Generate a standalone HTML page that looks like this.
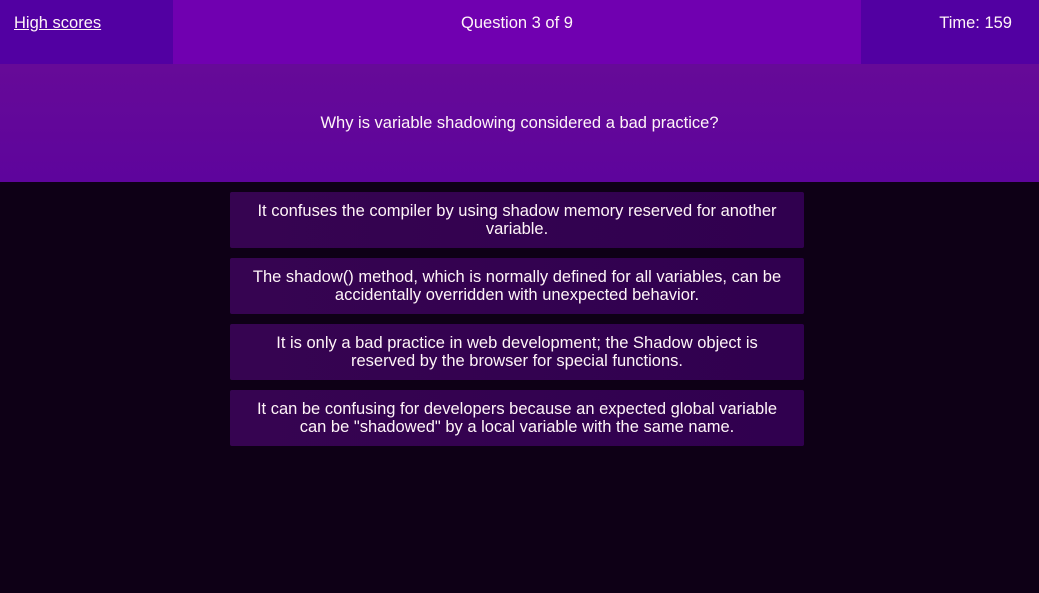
<!DOCTYPE html>
<html><head><meta charset="utf-8"><style>
html,body{margin:0;padding:0;width:1039px;height:593px;overflow:hidden;background:#0e0016;font-family:"Liberation Sans",sans-serif;color:#fff4f8}
.hdr{position:absolute;top:0;left:0;width:1039px;height:64px;background:#7000b0}
.l{position:absolute;left:0;top:0;width:173px;height:64px;background:#5200a2}
.r{position:absolute;right:0;top:0;width:178px;height:64px;background:#5200a2}
.t{position:absolute;top:13px;font-size:16.5px;line-height:20px}
.q{position:absolute;top:64px;left:0;width:1039px;height:118px;background:linear-gradient(#660a98,#5e049c);text-align:center}
.q div{padding-top:50px;font-size:16.5px}
.a{position:absolute;left:230px;width:574px;height:56px;background:linear-gradient(90deg,#360451,#30004f);text-align:center;font-size:16.5px;line-height:18px;box-sizing:border-box;padding-top:10px;border-radius:2px}
</style></head><body>
<div class="hdr"><div class="l"></div><div class="r"></div>
<div class="t" style="left:14px;text-decoration:underline">High scores</div>
<div class="t" style="left:0;width:1034px;text-align:center">Question 3 of 9</div>
<div class="t" style="right:27px">Time: 159</div></div>
<div class="q"><div>Why is variable shadowing considered a bad practice?</div></div>
<div class="a" style="top:192px">It confuses the compiler by using shadow memory reserved for another<br>variable.</div>
<div class="a" style="top:258px">The shadow() method, which is normally defined for all variables, can be<br>accidentally overridden with unexpected behavior.</div>
<div class="a" style="top:324px">It is only a bad practice in web development; the Shadow object is<br>reserved by the browser for special functions.</div>
<div class="a" style="top:390px">It can be confusing for developers because an expected global variable<br>can be "shadowed" by a local variable with the same name.</div>
</body></html>
